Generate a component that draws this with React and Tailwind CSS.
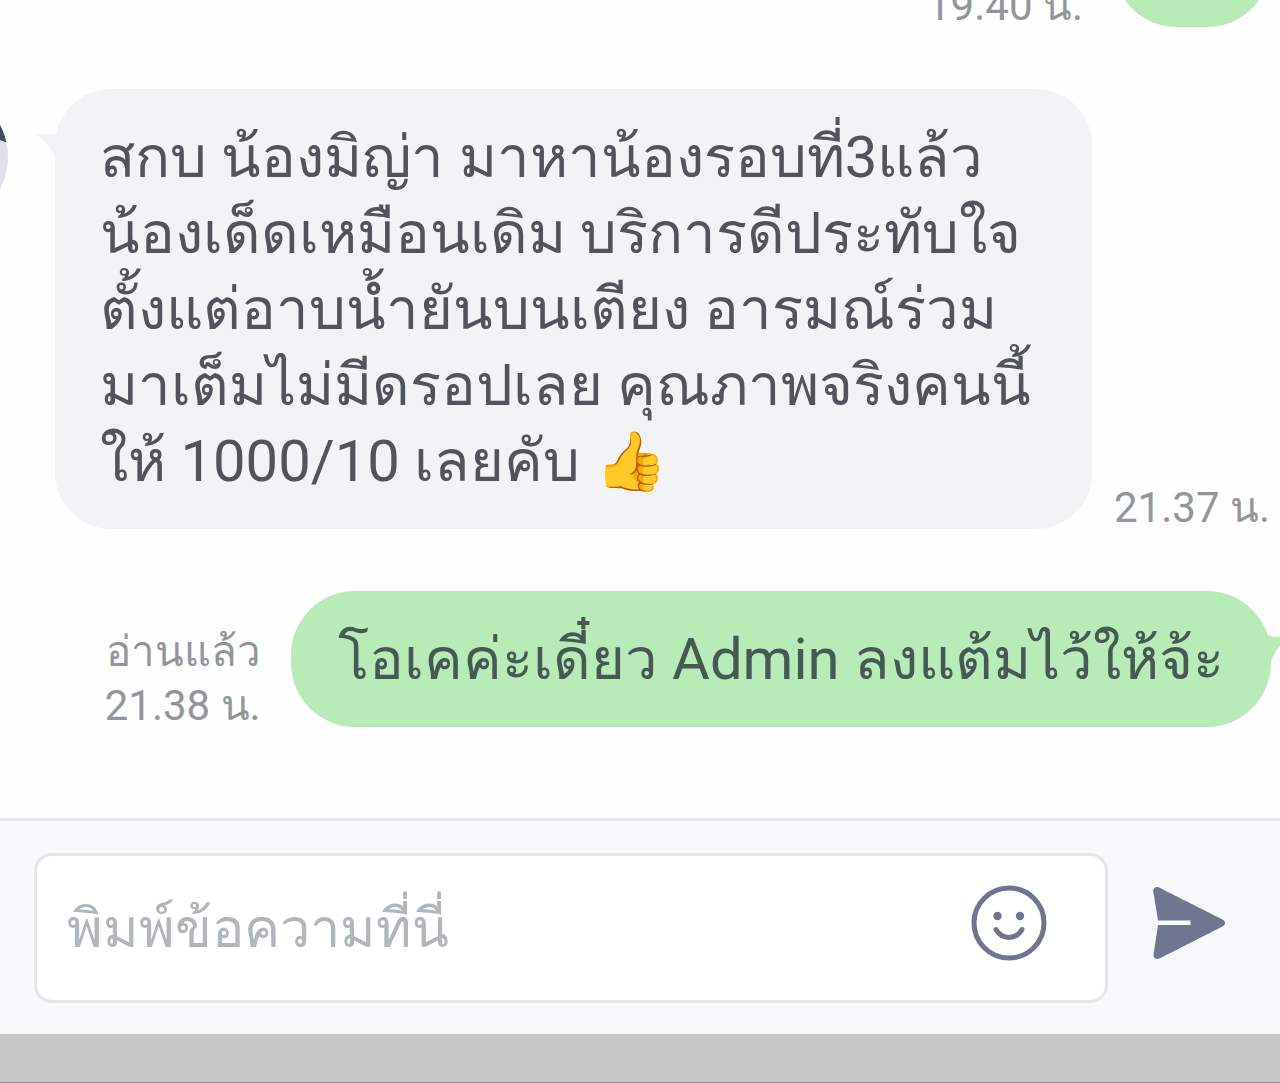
import { useState } from "react";

function Time({ value, read }) {
  return (
    <div className="flex shrink-0 flex-col gap-3 text-right text-[42px] leading-[42px] whitespace-nowrap text-[#92969b]">
      {read && <span>อ่านแล้ว</span>}
      <time>{value} น.</time>
    </div>
  );
}

function Avatar() {
  return (
    <div className="flex w-2 shrink-0 justify-end overflow-hidden">
      <svg viewBox="0 0 136 136" className="size-[136px] shrink-0" aria-hidden="true">
        <clipPath id="face">
          <circle cx="68" cy="68" r="68" />
        </clipPath>
        <g clipPath="url(#face)">
          <rect width="136" height="136" fill="#dfe0e9" />
          <path d="M0 0H136V54L128 51H0Z" fill="#414b5c" />
          <path d="M0 100H128L136 92V136H0Z" fill="#5d6168" />
        </g>
      </svg>
    </div>
  );
}

function SmileIcon() {
  return (
    <svg viewBox="0 0 76 76" className="size-[76px]" fill="none" aria-hidden="true">
      <circle cx="38" cy="38" r="35" stroke="#70758f" strokeWidth="5" />
      <circle cx="26.500" cy="31" r="4.200" fill="#70758f" />
      <circle cx="49" cy="31" r="4.200" fill="#70758f" />
      <path d="M25 44.500c6 10.500 20 10.500 26 0" stroke="#70758f" strokeWidth="5" strokeLinecap="round" />
    </svg>
  );
}

function SendIcon() {
  return (
    <svg viewBox="0 0 74 74" className="size-[74px]" aria-hidden="true">
      <path
        d="M7 1.400 70.500 33.500c3.400 1.700 3.400 5.300 0 7L7.500 72.600c-3.200 1.500-6.300-.6-6-4L6 39h32.500v-4.400H6L1.300 5.300C1 2.200 4.200 0 7 1.400Z"
        fill="#70768f"
      />
    </svg>
  );
}

function App() {
  const [text, setText] = useState("");

  return (
    <div className="flex min-h-screen flex-col bg-[#fefefe] font-['Roboto',sans-serif]">
      <main className="flex flex-1 flex-col gap-[62px] overflow-hidden">
        {/* previous message, scrolled out of view */}
        <div className="flex h-[27px] items-end justify-end gap-[30px] pr-[9px]">
          <Time value="19.40" />
          <div className="h-[136px] w-[158px] rounded-[64px] bg-[#b9ebb8]"></div>
        </div>

        <div className="flex pr-[10px]">
          <Avatar />
          <div className="relative ml-[47px] flex-1 rounded-[56px] bg-[#f1f3f5] px-[45px] py-[30px] text-[58px] leading-[76px] whitespace-nowrap text-[#50555b]">
            <svg viewBox="0 0 24 30" className="absolute top-[44px] -left-[20px] h-[30px] w-6" aria-hidden="true">
              <path d="M0 1C9 2 16 1 24 0v30C17 18 12 9 0 1Z" fill="#f1f3f5" />
            </svg>
            <p>
              สกบ น้องมิญ่า มาหาน้องรอบที่3แล้ว
              <br />
              น้องเด็ดเหมือนเดิม บริการดีประทับใจ
              <br />
              ตั้งแต่อาบน้ำยันบนเตียง อารมณ์ร่วม
              <br />
              มาเต็มไม่มีดรอปเลย คุณภาพจริงคนนี้
              <br />
              ให้ 1000/10 เลยคับ 👍
            </p>
          </div>
          <div className="ml-[22px] flex items-end">
            <Time value="21.37" />
          </div>
        </div>

        <div className="flex items-end justify-end gap-[30px] pr-[9px]">
          <Time value="21.38" read />
          <div className="relative rounded-[64px] bg-[#b9ebb8] px-[47px] py-[30px] text-[58px] leading-[76px] whitespace-nowrap text-[#465a54]">
            <svg viewBox="0 0 24 30" className="absolute top-[44px] -right-[20px] h-[30px] w-6" aria-hidden="true">
              <path d="M0 0C8 2 15 3 24 1 14 8 8 16 4 26H0Z" fill="#b9ebb8" />
            </svg>
            <p>โอเคค่ะเดี๋ยว Admin ลงแต้มไว้ให้จ้ะ</p>
          </div>
        </div>
      </main>

      <footer className="border-t-[3px] border-[#e4e6e8] bg-[#f7f9fb]">
        <form
          className="flex items-center gap-11 pt-8 pr-[54px] pb-[31px] pl-[34px]"
          onSubmit={(e) => {
            e.preventDefault();
            setText("");
          }}
        >
          <div className="flex h-[150px] flex-1 items-center rounded-[18px] border-[3px] border-[#e3e5e7] bg-white pr-[58px] pl-[30px]">
            <input
              type="text"
              aria-label="พิมพ์ข้อความที่นี่"
              placeholder="พิมพ์ข้อความที่นี่"
              value={text}
              onChange={(e) => setText(e.target.value)}
              className="h-[120px] min-w-0 flex-1 text-[54px] text-[#50555b] outline-none placeholder:text-[#b1b6ba]"
            />
            <button type="button" aria-label="Emoji" className="pb-[10px]">
              <SmileIcon />
            </button>
          </div>
          <button type="submit" aria-label="Send" className="pb-[10px]">
            <SendIcon />
          </button>
        </form>
        <div className="h-[49px] border-b border-[#8c8c8c] bg-[#c7c7c7]"></div>
      </footer>
    </div>
  );
}

export default App;
